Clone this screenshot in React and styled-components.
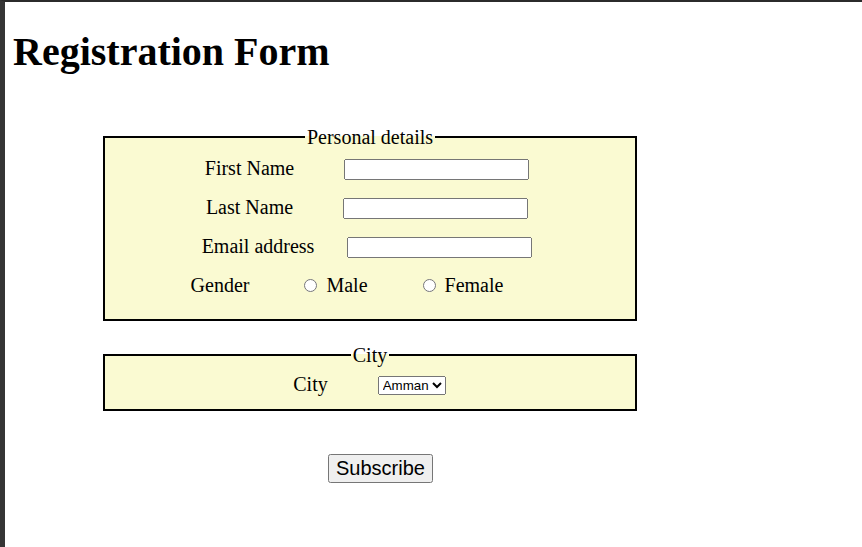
import React from "react";
import styled, { createGlobalStyle } from "styled-components";

const Global = createGlobalStyle`
  * { box-sizing: border-box; }
  html { background: #ffffff; }
  body {
    margin: 0;
    min-height: 547px;
    padding: 8px;
    border-left: 5px solid #353535;
    border-top: 2px solid #2b2b2b;
    font-family: "Liberation Serif", "Times New Roman", serif;
    color: #000;
    background: #fff;
  }
`;

const Title = styled.h1`
  margin: 18.5px 0 0;
  font-size: 40px;
  line-height: 46px;
  font-weight: bold;
  font-family: "Liberation Serif", serif;
`;

const Form = styled.form`
  width: 534px;
  margin: 51px 0 0 90px;
  display: flex;
  flex-direction: column;
`;

const Fieldset = styled.fieldset`
  margin: 0 0 ${(p) => p.$after || 0}px;
  border: 2px solid #000;
  background: #fafad2;
  padding: ${(p) => p.$padTop}px 12px ${(p) => p.$padBottom}px;
  font-size: 20px;
  display: flex;
  flex-direction: column;
  gap: 16px;
  min-width: 0;
`;

const Legend = styled.legend`
  margin: 0 auto;
  padding: 0 2px;
  font-size: 20px;
  line-height: 23px;
`;

const Row = styled.div`
  display: flex;
  align-items: center;
  justify-content: center;
  height: 23px;
  gap: ${(p) => p.$gap}px;
  padding-right: ${(p) => p.$shift || 0}px;
`;

const Label = styled.label`
  font-size: 20px;
  line-height: 23px;
  white-space: nowrap;
`;

const TextInput = styled.input`
  width: 185px;
  height: 21px;
  margin: 3px 0 0;
  font-family: "Liberation Sans", Arial, sans-serif;
  font-size: 13.33px;
`;

const RadioOption = styled.label`
  display: flex;
  align-items: center;
  gap: 9px;
  font-size: 20px;
  line-height: 23px;
`;

const Radio = styled.input`
  margin: 1px 0 0;
  width: 13px;
  height: 13px;
`;

const Select = styled.select`
  width: 68px;
  height: 19px;
  margin-top: 3px;
  font-family: "Liberation Sans", Arial, sans-serif;
  font-size: 13.33px;
`;

const ButtonRow = styled.div`
  display: flex;
  justify-content: center;
  padding-left: 21px;
`;

const Button = styled.button`
  font-family: "Liberation Sans", Arial, sans-serif;
  font-size: 20px;
  line-height: 23px;
  padding: 1px 6px;
`;

export default function App() {
  return (
    <>
      <Global />
      <Title>Registration Form</Title>
      <Form onSubmit={(e) => e.preventDefault()}>
        <Fieldset $padTop={8} $padBottom={22} $after={23}>
          <Legend>Personal details</Legend>
          <Row $gap={50} $shift={6}>
            <Label>First Name</Label>
            <TextInput type="text" />
          </Row>
          <Row $gap={50} $shift={6}>
            <Label>Last Name</Label>
            <TextInput type="text" />
          </Row>
          <Row $gap={33} $shift={6}>
            <Label>Email address</Label>
            <TextInput type="email" />
          </Row>
          <Row $gap={55} $shift={46}>
            <Label>Gender</Label>
            <RadioOption>
              <Radio type="radio" name="gender" value="male" />
              Male
            </RadioOption>
            <RadioOption>
              <Radio type="radio" name="gender" value="female" />
              Female
            </RadioOption>
          </Row>
        </Fieldset>
        <Fieldset $padTop={6} $padBottom={13} $after={43}>
          <Legend>City</Legend>
          <Row $gap={50} $shift={1}>
            <Label>City</Label>
            <Select defaultValue="Amman">
              <option>Amman</option>
              <option>Irbid</option>
              <option>Zarqa</option>
            </Select>
          </Row>
        </Fieldset>
        <ButtonRow>
          <Button type="submit">Subscribe</Button>
        </ButtonRow>
      </Form>
    </>
  );
}
